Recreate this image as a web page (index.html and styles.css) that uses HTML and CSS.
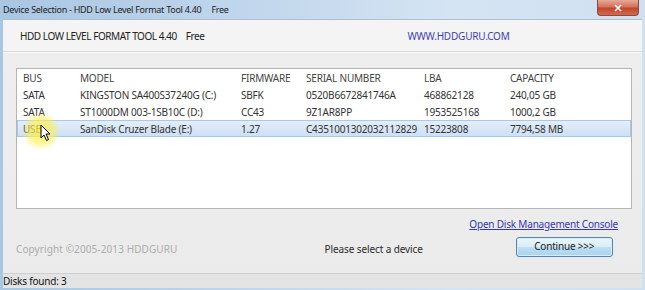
FILE: index.html
```html
<!DOCTYPE html>
<html>
<head>
<meta charset="utf-8">
<link rel="stylesheet" href="styles.css">
</head>
<body>
<div class="window">
  <div class="titlebar">
    <span class="title">Device Selection - HDD Low Level Format Tool 4.40</span>
    <span class="title free">Free</span>
    <div class="close"><svg width="10" height="8" viewBox="0 0 10 8"><path d="M2 1 L8 7 M8 1 L2 7" stroke="#fff" stroke-width="1.6"/></svg></div>
  </div>
  <div class="client">
    <div class="header">
      <span class="product">HDD LOW LEVEL FORMAT TOOL 4.40</span>
      <span class="product free2">Free</span>
      <span class="site">WWW.HDDGURU.COM</span>
    </div>
    <div class="main">
      <div class="list">
        <div class="row head">
          <span>BUS</span><span>MODEL</span><span>FIRMWARE</span><span>SERIAL NUMBER</span><span>LBA</span><span>CAPACITY</span>
        </div>
        <div class="row">
          <span>SATA</span><span>KINGSTON SA400S37240G (C:)</span><span>SBFK</span><span>0520B6672841746A</span><span>468862128</span><span>240,05 GB</span>
        </div>
        <div class="row">
          <span>SATA</span><span>ST1000DM 003-1SB10C (D:)</span><span>CC43</span><span>9Z1AR8PP</span><span>1953525168</span><span>1000,2 GB</span>
        </div>
        <div class="row selected">
          <span>USB</span><span>SanDisk Cruzer Blade (E:)</span><span>1.27</span><span>C4351001302032112829</span><span>15223808</span><span>7794,58 MB</span>
        </div>
      </div>
      <div class="linkrow"><a class="link">Open Disk Management Console</a></div>
      <div class="bottom">
        <span class="copy">Copyright ©2005-2013 HDDGURU</span>
        <span class="prompt">Please select a device</span>
        <div class="button">Continue &gt;&gt;&gt;</div>
      </div>
    </div>
    <div class="status">Disks found: 3</div>
  </div>
  <div class="cursor">
    <svg width="12" height="18" viewBox="0 0 12 18"><path d="M1 1 L1 14 L4 11 L6.5 16.5 L8.5 15.5 L6 10 L10 10 Z" fill="#fff" stroke="#000" stroke-width="1"/></svg>
  </div>
</div>
</body>
</html>
```
FILE: styles.css
```css
html, body {
  margin: 0;
  padding: 0;
}
body {
  width: 645px;
  height: 290px;
  overflow: hidden;
  font-family: "Noto Sans", "Open Sans", sans-serif;
  font-size: 10px;
  color: #2a2a2a;
  background: #9dbbd8;
}
.window {
  position: relative;
  width: 645px;
  height: 290px;
  display: flex;
  flex-direction: column;
  box-sizing: border-box;
  padding: 0 3px 2px 3px;
  background: linear-gradient(90deg, #a9c6e2 0%, #c2d7ec 40%, #d4e4f3 70%, #cfe0f0 100%);
}
.window > *, .client > *, .main > * {
  flex-shrink: 0;
}
.titlebar {
  height: 19px;
  display: flex;
  align-items: center;
  gap: 10px;
  position: relative;
}
.title {
  font-size: 9px;
  color: #1d1d1d;
  letter-spacing: -0.28px;
}
.close {
  position: absolute;
  right: 3px;
  top: 0;
  width: 42px;
  height: 16px;
  border-radius: 0 0 4px 4px;
  background: linear-gradient(180deg, #e8a898 0%, #d4735c 45%, #c0452c 55%, #d06a50 100%);
  border: 1px solid #8a4a3c;
  border-top: none;
  box-sizing: border-box;
  display: flex;
  align-items: center;
  justify-content: center;
}
.client {
  flex: 1;
  display: flex;
  flex-direction: column;
  background: linear-gradient(180deg, #eeeeee 0%, #ebebeb 100%);
  border-top: 1px solid #aebfd2;
}
.header {
  height: 31px;
  display: flex;
  align-items: center;
  padding-left: 17px;
  background: #f4f4f4;
  border-bottom: 1px solid #d8d8d8;
  box-shadow: 0 1px 0 #fafafa;
}
.product {
  color: #222;
  letter-spacing: -0.45px;
}
.free2 {
  margin-left: 9px;
}
.site {
  margin-left: 203px;
  color: #3e3eb8;
  letter-spacing: -0.2px;
}
.main {
  padding: 16px 10px 0 13px;
  display: flex;
  flex-direction: column;
}
.list {
  height: 141px;
  box-sizing: border-box;
  background: #fff;
  border: 1px solid #b4b4b4;
}
.row {
  display: grid;
  grid-template-columns: 57px 161px 65px 118px 86px 1fr;
  height: 17px;
  align-items: center;
  padding-left: 6px;
  box-sizing: border-box;
  letter-spacing: -0.2px;
  color: #333;
}
.row.head {
  color: #444;
}
.row.selected {
  background: linear-gradient(180deg, #e3eefa 0%, #cde0f5 100%);
  border: 1px solid #a9c8ea;
  padding-left: 5px;
}
.row span {
  white-space: nowrap;
}
.linkrow {
  display: flex;
  justify-content: flex-end;
  padding-right: 14px;
  margin-top: 8px;
  height: 14px;
  align-items: center;
}
.link {
  color: #3535b5;
  text-decoration: underline;
  letter-spacing: -0.2px;
}
.bottom {
  display: flex;
  align-items: center;
  margin-top: 5px;
  height: 21px;
}
.copy {
  color: #acacac;
  letter-spacing: 0.1px;
  position: relative;
  top: 2px;
}
.prompt {
  margin-left: 147px;
  color: #2a2a2a;
  letter-spacing: -0.1px;
  position: relative;
  top: 2px;
}
.button {
  margin-left: 93px;
  width: 97px;
  height: 20px;
  box-sizing: border-box;
  border: 1px solid #4e88b4;
  border-radius: 3px;
  background: linear-gradient(180deg, #ecf6fc 0%, #d8ecf8 50%, #bcdff3 51%, #a9d4ef 100%);
  box-shadow: inset 0 0 0 1px #d6eefb;
  display: flex;
  justify-content: center;
  align-items: center;
  padding-bottom: 1px;
  color: #222;
  letter-spacing: -0.2px;
}
.status {
  margin-top: 16px;
  height: 14px;
  border-top: 1px solid #cfcfcf;
  background: #e4e4e4;
  display: flex;
  align-items: center;
  color: #111;
  letter-spacing: -0.2px;
}
.cursor {
  position: absolute;
  left: 22px;
  top: 112px;
  width: 38px;
  height: 38px;
  border-radius: 50%;
  background: radial-gradient(circle, rgba(255,240,60,0.85) 0%, rgba(255,240,80,0.6) 45%, rgba(255,245,120,0) 72%);
}
.cursor svg {
  position: absolute;
  left: 18px;
  top: 12px;
}
```
